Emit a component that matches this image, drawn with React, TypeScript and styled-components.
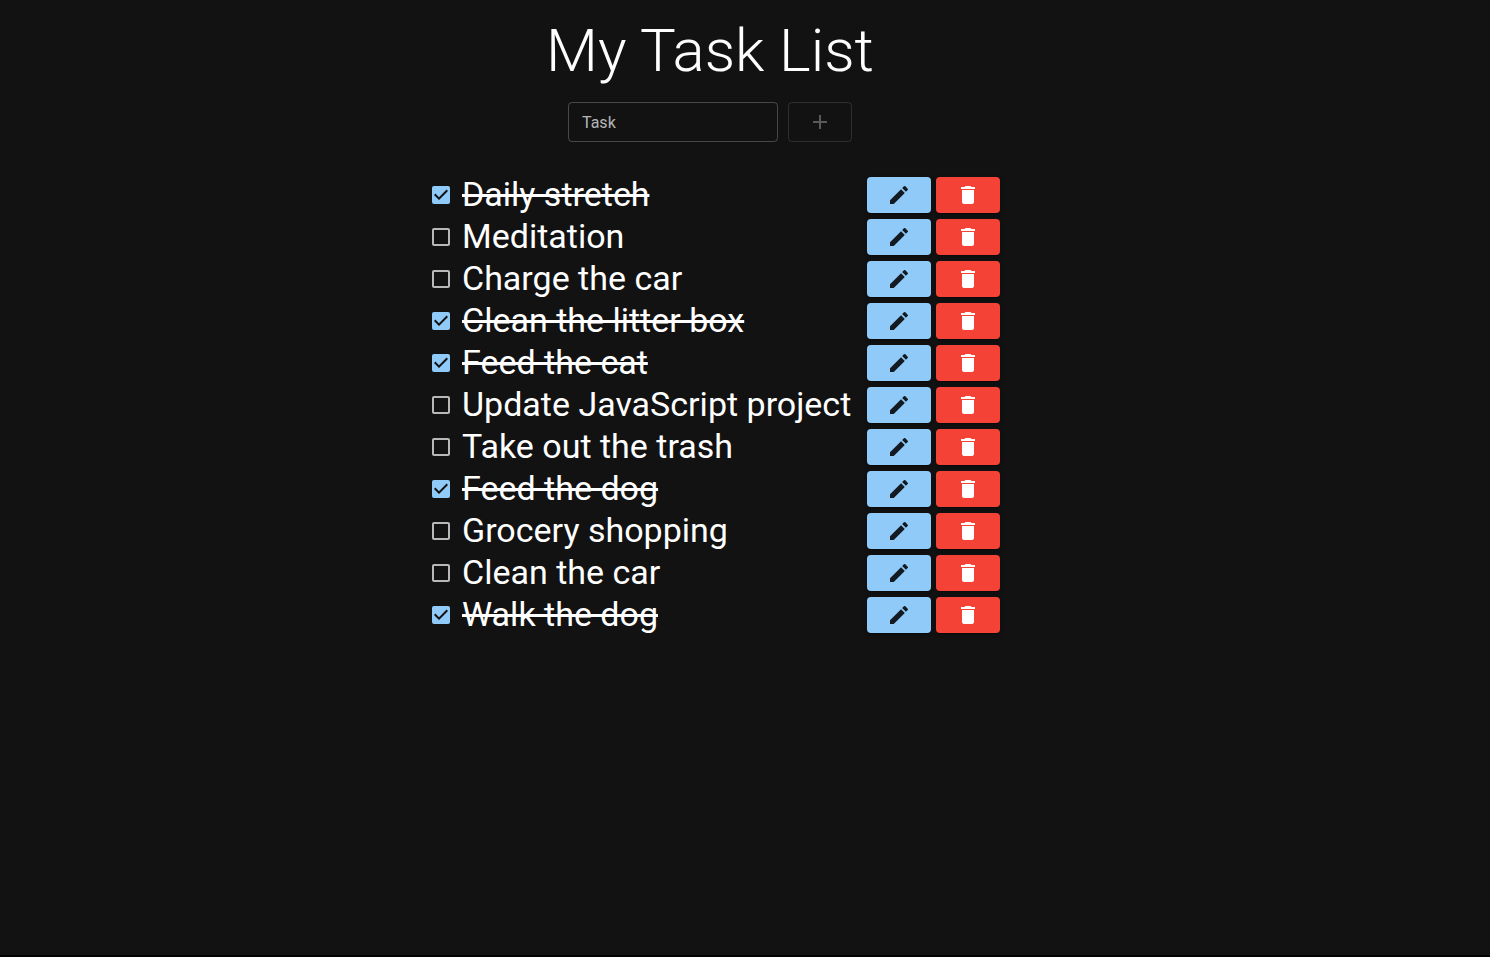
import React, { useState } from "react";
import styled, { createGlobalStyle } from "styled-components";
import {
  MdAdd,
  MdCheckBox,
  MdCheckBoxOutlineBlank,
  MdDelete,
  MdEdit,
} from "react-icons/md";

interface Task {
  id: number;
  name: string;
  done: boolean;
}

const initialTasks: Task[] = [
  { id: 1, name: "Daily stretch", done: true },
  { id: 2, name: "Meditation", done: false },
  { id: 3, name: "Charge the car", done: false },
  { id: 4, name: "Clean the litter box", done: true },
  { id: 5, name: "Feed the cat", done: true },
  { id: 6, name: "Update JavaScript project", done: false },
  { id: 7, name: "Take out the trash", done: false },
  { id: 8, name: "Feed the dog", done: true },
  { id: 9, name: "Grocery shopping", done: false },
  { id: 10, name: "Clean the car", done: false },
  { id: 11, name: "Walk the dog", done: true },
];

const GlobalStyle = createGlobalStyle`
  *, *::before, *::after {
    box-sizing: border-box;
  }
  body {
    margin: 0;
    background: #121212;
    color: #fff;
    font-family: Roboto, "Liberation Sans", sans-serif;
  }
`;

const Page = styled.main`
  display: flex;
  flex-direction: column;
  align-items: center;
  min-height: 100vh;
  padding: 14px 70px 14px 0;
  border-bottom: 2px solid #000;
`;

const Title = styled.h1`
  margin: 0 0 14px;
  font-size: 60px;
  font-weight: 300;
  line-height: 74px;
`;

const TaskForm = styled.form`
  display: flex;
  gap: 10px;
  margin-bottom: 32px;
`;

const TaskInput = styled.input`
  width: 210px;
  height: 40px;
  padding: 0 13px;
  border: 1px solid rgba(255, 255, 255, 0.23);
  border-radius: 4px;
  background: transparent;
  color: #fff;
  font: inherit;
  font-size: 16px;

  &::placeholder {
    color: rgba(255, 255, 255, 0.7);
    opacity: 1;
  }
`;

const BaseButton = styled.button`
  display: inline-flex;
  align-items: center;
  justify-content: center;
  width: 64px;
  padding: 0;
  border: 0;
  border-radius: 4px;
  font-size: 24px;
  cursor: pointer;
`;

const AddButton = styled(BaseButton)`
  height: 40px;
  border: 1px solid rgba(144, 202, 249, 0.5);
  background: transparent;
  color: #90caf9;

  &:disabled {
    border-color: rgba(255, 255, 255, 0.12);
    color: rgba(255, 255, 255, 0.3);
    cursor: default;
  }
`;

const ActionButton = styled(BaseButton)<{ $tone: "edit" | "delete" }>`
  flex: none;
  height: 36px;
  background: ${({ $tone }) => ($tone === "edit" ? "#90caf9" : "#f44336")};
  color: ${({ $tone }) => ($tone === "edit" ? "rgba(0, 0, 0, 0.87)" : "#fff")};
  box-shadow: 0 3px 1px -2px rgba(0, 0, 0, 0.2),
    0 2px 2px 0 rgba(0, 0, 0, 0.14), 0 1px 5px 0 rgba(0, 0, 0, 0.12);
`;

const TaskList = styled.ul`
  width: 100%;
  max-width: 580px;
  margin: 0;
  padding: 0;
  list-style: none;
`;

const TaskRow = styled.li`
  display: flex;
  align-items: center;
  min-height: 42px;
`;

const Checkbox = styled.span<{ $checked: boolean }>`
  position: relative;
  display: inline-flex;
  flex: none;
  padding: 9px;
  font-size: 24px;
  color: ${({ $checked }) => ($checked ? "#90caf9" : "rgba(255, 255, 255, 0.7)")};
`;

const CheckboxInput = styled.input`
  position: absolute;
  inset: 0;
  width: 100%;
  height: 100%;
  margin: 0;
  opacity: 0;
  cursor: pointer;
`;

const TaskName = styled.label<{ $done: boolean }>`
  align-self: flex-start;
  font-size: 34px;
  line-height: 40px;
  text-decoration: ${({ $done }) => ($done ? "line-through" : "none")};
`;

const Actions = styled.div`
  display: flex;
  flex: none;
  gap: 5px;
  margin-left: auto;
`;

export default function App() {
  const [tasks, setTasks] = useState<Task[]>(initialTasks);
  const [draft, setDraft] = useState("");

  const addTask = (event: React.FormEvent) => {
    event.preventDefault();
    setTasks([...tasks, { id: Date.now(), name: draft.trim(), done: false }]);
    setDraft("");
  };

  const toggleTask = (id: number) =>
    setTasks(tasks.map((t) => (t.id === id ? { ...t, done: !t.done } : t)));

  const deleteTask = (id: number) => setTasks(tasks.filter((t) => t.id !== id));

  const editTask = (task: Task) => {
    setDraft(task.name);
    deleteTask(task.id);
  };

  return (
    <>
      <GlobalStyle />
      <Page>
        <Title>My Task List</Title>
        <TaskForm onSubmit={addTask}>
          <TaskInput
            type="text"
            aria-label="Task"
            placeholder="Task"
            value={draft}
            onChange={(event) => setDraft(event.target.value)}
          />
          <AddButton type="submit" aria-label="Add task" disabled={!draft.trim()}>
            <MdAdd />
          </AddButton>
        </TaskForm>
        <TaskList>
          {tasks.map((task) => (
            <TaskRow key={task.id}>
              <Checkbox $checked={task.done}>
                <CheckboxInput
                  id={`task-${task.id}`}
                  type="checkbox"
                  checked={task.done}
                  onChange={() => toggleTask(task.id)}
                />
                {task.done ? <MdCheckBox /> : <MdCheckBoxOutlineBlank />}
              </Checkbox>
              <TaskName htmlFor={`task-${task.id}`} $done={task.done}>
                {task.name}
              </TaskName>
              <Actions>
                <ActionButton
                  type="button"
                  $tone="edit"
                  aria-label={`Edit ${task.name}`}
                  onClick={() => editTask(task)}
                >
                  <MdEdit />
                </ActionButton>
                <ActionButton
                  type="button"
                  $tone="delete"
                  aria-label={`Delete ${task.name}`}
                  onClick={() => deleteTask(task.id)}
                >
                  <MdDelete />
                </ActionButton>
              </Actions>
            </TaskRow>
          ))}
        </TaskList>
      </Page>
    </>
  );
}
